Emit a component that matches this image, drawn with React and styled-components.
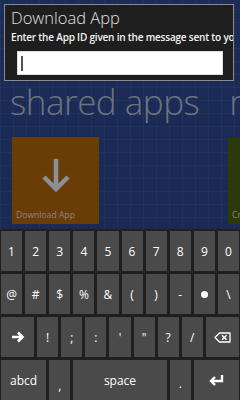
import React from 'react';
import styled, { createGlobalStyle } from 'styled-components';

const Global = createGlobalStyle`
  html, body { margin: 0; padding: 0; background: #111; }
  * { box-sizing: border-box; }
`;

const Screen = styled.div`
  position: relative;
  width: 240px;
  height: 400px;
  overflow: hidden;
  display: flex;
  flex-direction: column;
  font-family: "Open Sans", "Noto Sans", sans-serif;
  background-color: #1a2b56;
  background-image:
    repeating-linear-gradient(90deg, rgba(120,150,210,0.06) 0 1px, transparent 1px 13px),
    repeating-linear-gradient(0deg, rgba(120,150,210,0.06) 0 1px, transparent 1px 13px),
    linear-gradient(180deg, #1b2c57, #182850);
`;

const Dialog = styled.div`
  margin: 4px 6px 0 4px;
  height: 77px;
  background: #1e1e1e;
  border: 1px solid #8a8a8a;
  padding: 2px 0 0 6px;
  overflow: hidden;
  white-space: nowrap;
`;

const Title = styled.div`
  color: #e0e0e0;
  font-size: 16.5px;
  font-weight: 300;
  line-height: 21px;
`;

const Prompt = styled.div`
  color: #f4f4f4;
  font-size: 10px;
  font-weight: 600;
  line-height: 14px;
  margin-top: 2px;
  letter-spacing: -0.2px;
`;

const Field = styled.div`
  margin: 7px 0 0 6px;
  width: 206px;
  height: 24px;
  background: #fff;
  border: 1px solid #ddd;
  padding: 4px 0 0 3px;
`;

const Caret = styled.div`
  width: 2px;
  height: 15px;
  background: #555;
`;

const Header = styled.div`
  display: flex;
  gap: 30px;
  margin: -2px 0 0 10px;
  color: #6f7380;
  font-size: 35px;
  font-weight: 300;
  line-height: 46px;
  white-space: nowrap;
  letter-spacing: -0.5px;
`;

const Tiles = styled.div`
  display: flex;
  margin: 12px 0 0 12px;
  gap: 129px;
`;

const Tile = styled.div`
  flex: none;
  width: 87px;
  height: 87px;
  background: ${(p) => p.$bg};
  display: flex;
  flex-direction: column;
  align-items: center;
  padding: 4px 4px 3px 4px;
`;

const TileIcon = styled.svg`
  flex: 1;
`;

const TileLabel = styled.div`
  align-self: flex-start;
  color: #868686;
  font-size: 8.6px;
  line-height: 12px;
  white-space: nowrap;
`;

const Keyboard = styled.div`
  margin-top: auto;
  height: 171px;
  background: #1f1f1f;
  padding: 2px 1px 0 1px;
  display: grid;
  grid-template-rows: repeat(4, 40px);
  row-gap: 3px;
`;

const Row = styled.div`
  display: grid;
  grid-template-columns: repeat(20, 1fr);
  column-gap: 3px;
`;

const Key = styled.div`
  grid-column: span ${(p) => p.$span || 2};
  background: #4a4a4a;
  color: #fff;
  font-size: ${(p) => p.$size || 12}px;
  display: flex;
  align-items: center;
  justify-content: center;
  padding-top: ${(p) => p.$drop || 0}px;
`;

const Dot = styled.span`
  width: 7px;
  height: 7px;
  border-radius: 50%;
  background: #fff;
`;

const ArrowRight = () => (
  <svg width="14" height="12" viewBox="0 0 14 12">
    <path d="M1 6h10M7 1.5 11.5 6 7 10.5" stroke="#fff" strokeWidth="2.6" fill="none" />
  </svg>
);

const Backspace = () => (
  <svg width="17" height="11" viewBox="0 0 17 11">
    <path d="M5.5 1H16v9H5.5L1 5.5z" stroke="#fff" strokeWidth="1.3" fill="none" strokeLinejoin="round" />
    <path d="M8 3.2l4.6 4.6M12.6 3.2 8 7.8" stroke="#fff" strokeWidth="1.5" />
  </svg>
);

const Enter = () => (
  <svg width="15" height="12" viewBox="0 0 15 12">
    <path d="M13 1v6H3" stroke="#fff" strokeWidth="2.4" fill="none" />
    <path d="M6 3 2 7l4 4" stroke="#fff" strokeWidth="2.4" fill="none" />
  </svg>
);

const numbers = ['1', '2', '3', '4', '5', '6', '7', '8', '9', '0'];
const symbols = ['@', '#', '$', '%', '&', '(', ')', '-', 'dot', '\\'];
const punct = ['!', ';', ':', "'", '"', '?', '/'];

const App = () => (
  <Screen>
    <Global />
    <Dialog>
      <Title>Download App</Title>
      <Prompt>Enter the App ID given in the message sent to you</Prompt>
      <Field>
        <Caret />
      </Field>
    </Dialog>
    <Header>
      <span>shared apps</span>
      <span>my apps</span>
    </Header>
    <Tiles>
      <Tile $bg="#6b3d06">
        <TileIcon width="40" height="40" viewBox="0 0 40 40">
          <path d="M20 4v30M8 22l12 12 12-12" stroke="#8a9098" strokeWidth="4.5" fill="none" />
        </TileIcon>
        <TileLabel>Download App</TileLabel>
      </Tile>
      <Tile $bg="#2b3a06">
        <TileIcon width="40" height="40" viewBox="0 0 40 40" />
        <TileLabel>Create App</TileLabel>
      </Tile>
    </Tiles>
    <Keyboard>
      <Row>
        {numbers.map((k) => (
          <Key key={k}>{k}</Key>
        ))}
      </Row>
      <Row>
        {symbols.map((k) => (
          <Key key={k}>{k === 'dot' ? <Dot /> : k}</Key>
        ))}
      </Row>
      <Row>
        <Key $span={3}>
          <ArrowRight />
        </Key>
        {punct.map((k) => (
          <Key key={k}>{k}</Key>
        ))}
        <Key $span={3}>
          <Backspace />
        </Key>
      </Row>
      <Row>
        <Key $span={4}>abcd</Key>
        <Key $drop={10}>,</Key>
        <Key $span={8}>space</Key>
        <Key $drop={6}>.</Key>
        <Key $span={4}>
          <Enter />
        </Key>
      </Row>
    </Keyboard>
  </Screen>
);

export default App;
